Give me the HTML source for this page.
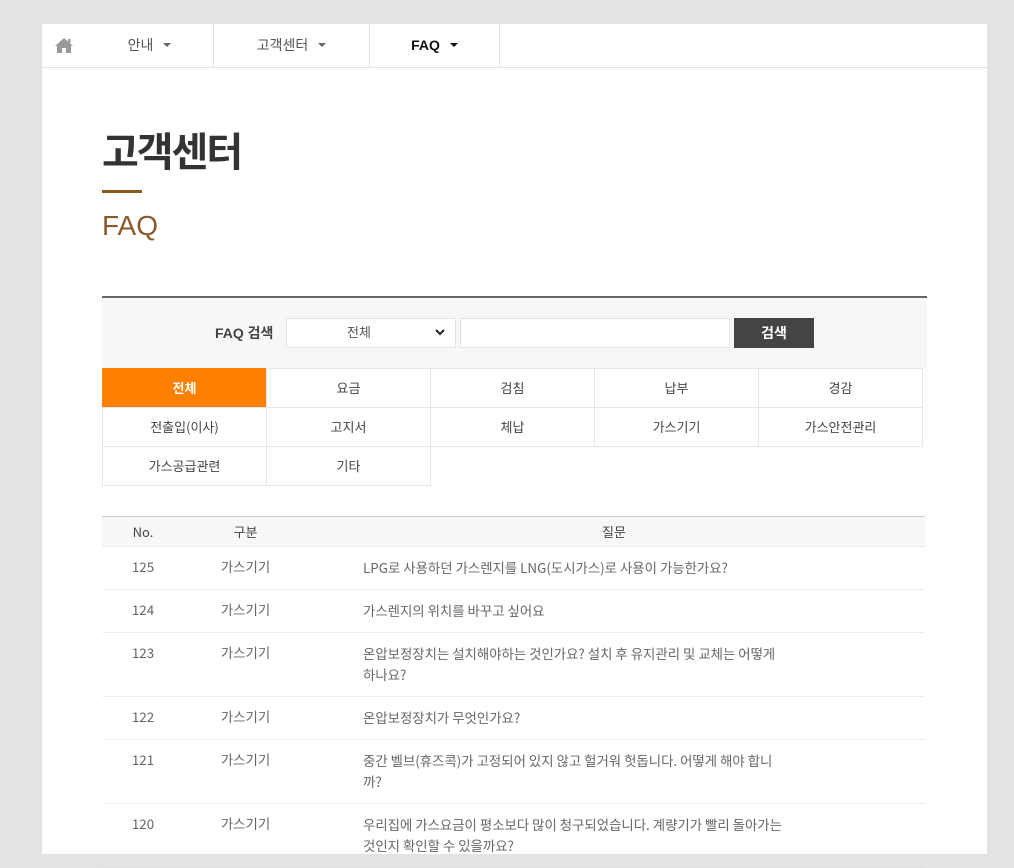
<!DOCTYPE html>
<html><head><meta charset="utf-8">
<style>
*{margin:0;padding:0;box-sizing:border-box}
html,body{width:1014px;height:849px;overflow:hidden;background:#e3e3e3;font-family:"Liberation Sans","Noto Sans CJK KR",sans-serif;color:#555}
#wrap{position:absolute;left:42px;top:24px;width:945px;height:830px;background:#fff}
#nav{height:44px;border-bottom:1px solid #e3e3e3;position:relative}
.ni{position:absolute;top:0;height:43px;line-height:43px;font-size:14px;color:#555;text-align:center}
.ni .c{display:inline-block;width:0;height:0;border-left:4px solid transparent;border-right:4px solid transparent;border-top:4px solid #666;vertical-align:middle;margin-left:10px;margin-top:-2px}
.sep{position:absolute;top:0;width:1px;height:43px;background:#e3e3e3}
h1{position:absolute;left:60px;top:96px;font-size:40px;font-weight:bold;color:#333;letter-spacing:-2px}
.bar{position:absolute;left:60px;top:166px;width:40px;height:3px;background:#8b5a1e}
h2{position:absolute;left:60px;top:186px;font-size:28px;font-weight:normal;color:#8b5a2b}
#search{position:absolute;left:60px;top:272px;width:825px;height:72px;border-top:2px solid #666;background:#f7f7f7}
#search .lb{position:absolute;left:113px;top:25px;font-size:14px;font-weight:bold;color:#444}
#search .sel{position:absolute;left:184px;top:20px;width:170px;height:30px;background:#fff;border:1px solid #e3e3e3;font-size:13px;line-height:28px;color:#555;padding-left:60px}
#search .sel svg{position:absolute;right:10px;top:10px}
#search .inp{position:absolute;left:358px;top:20px;width:270px;height:30px;background:#fff;border:1px solid #e3e3e3}
#search .btn{position:absolute;left:632px;top:20px;width:80px;height:30px;background:#444;color:#fff;font-size:14px;font-weight:bold;text-align:center;line-height:30px}
#tabs{position:absolute;left:60px;top:344px;width:821px;font-family:"Noto Sans CJK KR","Liberation Sans",sans-serif}
.t{position:absolute;width:165px;height:40px;border:1px solid #e7e7e7;text-align:center;line-height:38px;font-size:13px;color:#444;background:#fff}
.t.on{background:#ff7f00;color:#fff;font-weight:bold;border-color:#ff7f00}
#tbl{position:absolute;left:60px;top:492px;width:823px;border-top:1px solid #ccc;font-family:"Noto Sans CJK KR","Liberation Sans",sans-serif}
.hd{height:30px;background:#f7f7f7;border-bottom:1px dotted #ddd;position:relative;font-size:13px;color:#444;line-height:29px}
.r{position:relative;border-bottom:1px dotted #ddd;font-size:13.4px;color:#666;line-height:21px}
.no{position:absolute;left:0;width:82px;text-align:center}
.gb{position:absolute;left:82px;width:123px;text-align:center}
.q{margin-left:261px;width:422px;padding:10px 0 11px}
.r .no,.r .gb{top:9px}
</style></head><body>
<div id="wrap">
 <div id="nav">
  <svg style="position:absolute;left:12px;top:13px" width="20" height="17" viewBox="0 0 20 17"><path d="M10 1 L1 9 L3 9 L3 16 L8 16 L8 11 L12 11 L12 16 L17 16 L17 9 L19 9 Z" fill="#999"/><rect x="14" y="2" width="2.5" height="4" fill="#999"/></svg>
  <div class="ni" style="left:52px;width:111px">안내<span class="c"></span></div>
  <div class="sep" style="left:171px"></div>
  <div class="ni" style="left:172px;width:155px">고객센터<span class="c"></span></div>
  <div class="sep" style="left:327px"></div>
  <div class="ni" style="left:328px;width:129px;color:#111;font-weight:bold">FAQ<span class="c" style="border-top-color:#111"></span></div>
  <div class="sep" style="left:457px"></div>
 </div>
 <h1>고객센터</h1>
 <div class="bar"></div>
 <h2>FAQ</h2>
 <div id="search">
  <div class="lb">FAQ 검색</div>
  <div class="sel">전체<svg width="10" height="7" viewBox="0 0 10 7"><path d="M1 1 L5 5 L9 1" stroke="#222" stroke-width="2" fill="none"/></svg></div>
  <div class="inp"></div>
  <div class="btn">검색</div>
 </div>
 <div id="tabs">
  <div class="t on" style="left:0;top:0">전체</div>
  <div class="t" style="left:164px;top:0">요금</div>
  <div class="t" style="left:328px;top:0">검침</div>
  <div class="t" style="left:492px;top:0">납부</div>
  <div class="t" style="left:656px;top:0">경감</div>
  <div class="t" style="left:0;top:39px">전출입(이사)</div>
  <div class="t" style="left:164px;top:39px">고지서</div>
  <div class="t" style="left:328px;top:39px">체납</div>
  <div class="t" style="left:492px;top:39px">가스기기</div>
  <div class="t" style="left:656px;top:39px">가스안전관리</div>
  <div class="t" style="left:0;top:78px">가스공급관련</div>
  <div class="t" style="left:164px;top:78px">기타</div>
 </div>
 <div id="tbl">
  <div class="hd"><span class="no">No.</span><span class="gb">구분</span><span style="position:absolute;left:500px">질문</span></div>
  <div class="r"><span class="no">125</span><span class="gb">가스기기</span><div class="q">LPG로 사용하던 가스렌지를 LNG(도시가스)로 사용이 가능한가요?</div></div>
  <div class="r"><span class="no">124</span><span class="gb">가스기기</span><div class="q">가스렌지의 위치를 바꾸고 싶어요</div></div>
  <div class="r"><span class="no">123</span><span class="gb">가스기기</span><div class="q">온압보정장치는 설치해야하는 것인가요? 설치 후 유지관리 및 교체는 어떻게 하나요?</div></div>
  <div class="r"><span class="no">122</span><span class="gb">가스기기</span><div class="q">온압보정장치가 무엇인가요?</div></div>
  <div class="r"><span class="no">121</span><span class="gb">가스기기</span><div class="q">중간 벨브(휴즈콕)가 고정되어 있지 않고 헐거워 헛돕니다. 어떻게 해야 합니까?</div></div>
  <div class="r"><span class="no">120</span><span class="gb">가스기기</span><div class="q">우리집에 가스요금이 평소보다 많이 청구되었습니다. 계량기가 빨리 돌아가는 것인지 확인할 수 있을까요?</div></div>
 </div>
</div>
</body></html>
